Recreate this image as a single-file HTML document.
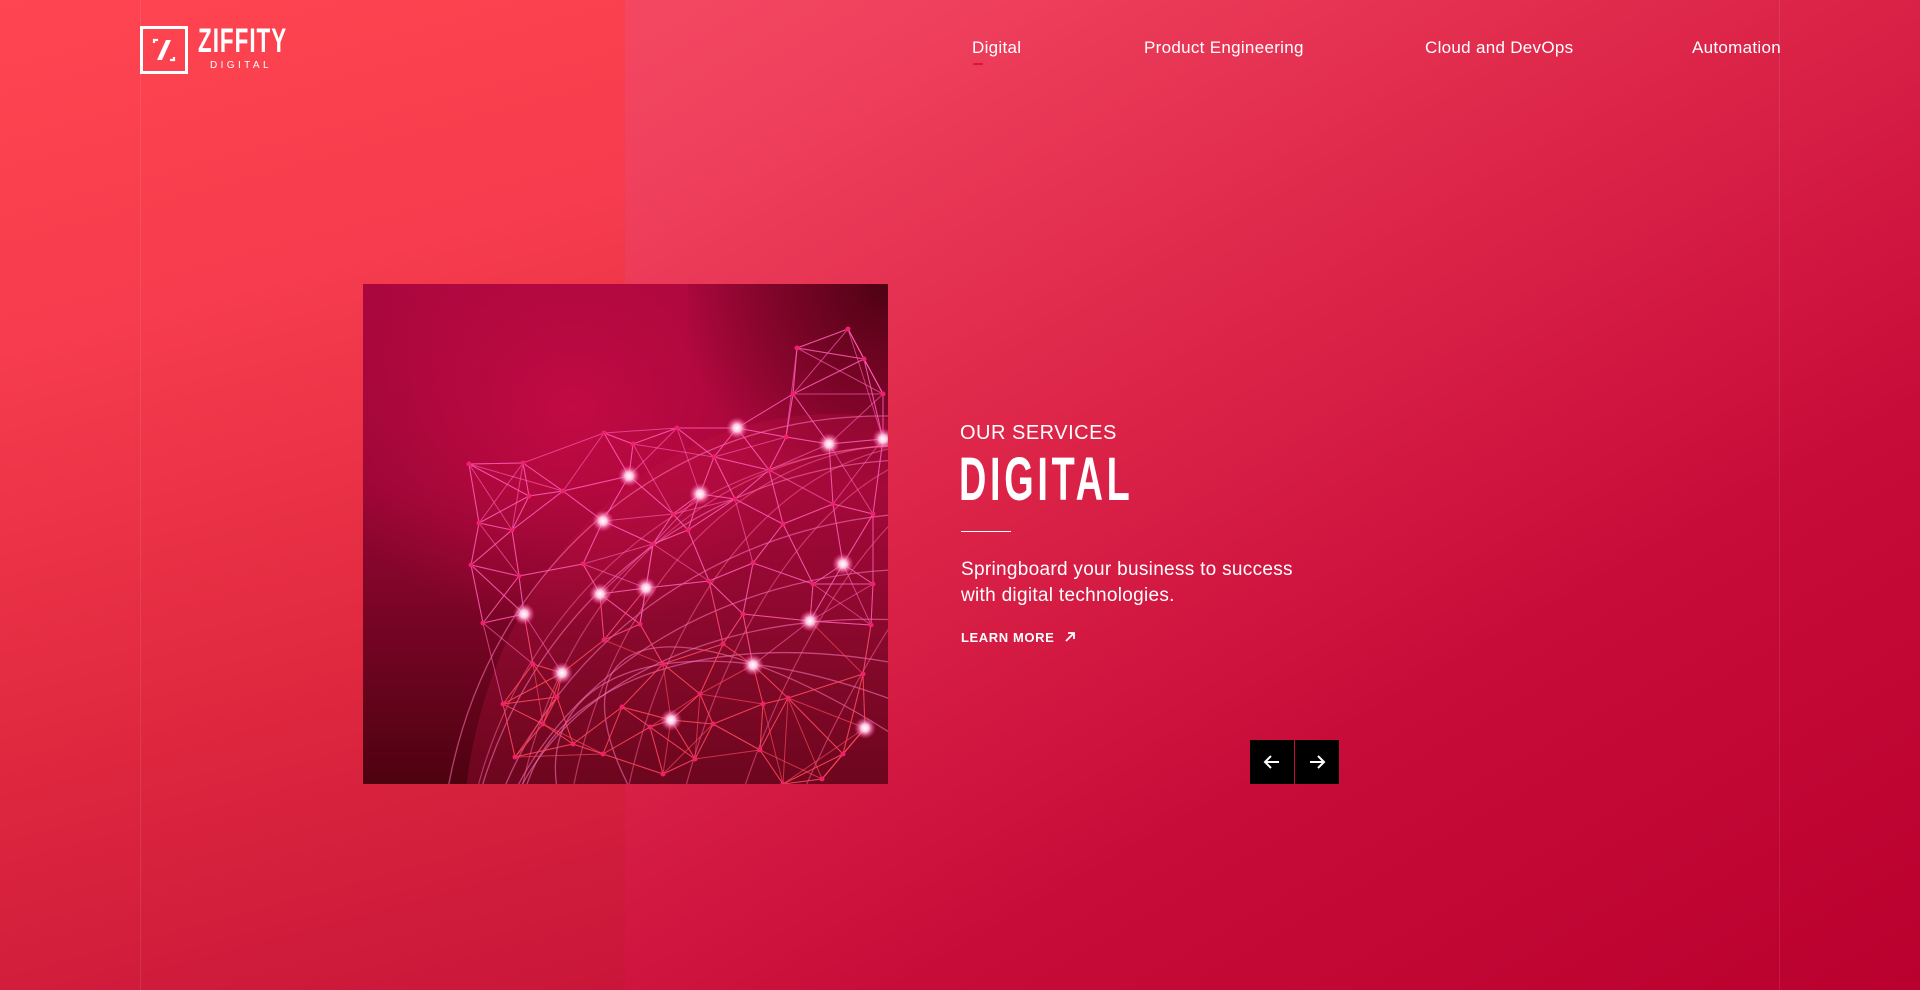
<!DOCTYPE html>
<html><head><meta charset="utf-8">
<style>
*{margin:0;padding:0;box-sizing:border-box}
html,body{width:1920px;height:990px;overflow:hidden}
body{position:relative;font-family:"Liberation Sans",sans-serif;color:#fff;
background:linear-gradient(150deg,#fc5268 0%,#f0425e 25%,#dc2448 50%,#c80c3a 72%,#ba002e 100%);}
.left{position:absolute;left:0;top:0;width:625px;height:990px;
background:linear-gradient(165deg,#ff4550 0%,#f63c4e 30%,#e0283f 65%,#c8163a 100%);}
.vl{position:absolute;top:0;width:1px;height:990px;background:rgba(255,255,255,0.09)}
.logo{position:absolute;left:140px;top:26px;width:48px;height:48px;border:3px solid #fff}
.logotext{position:absolute;left:198px;top:24px;font-weight:bold;font-size:34px;letter-spacing:1.5px;transform:scaleX(0.66);transform-origin:left top;line-height:34px;white-space:nowrap}
.logosub{position:absolute;left:210px;top:60px;font-size:10px;letter-spacing:3.4px;line-height:12px}
.nav{position:absolute;top:38px;font-size:17px;letter-spacing:0.3px;line-height:20px;white-space:nowrap}
.ul{position:absolute;left:973px;top:63px;width:10px;height:2px;background:#e0133d}
.img{position:absolute;left:363px;top:284px;width:525px;height:500px;overflow:hidden;
background:radial-gradient(ellipse 260px 220px at 40% 25%,#c20a44 0%,rgba(180,8,60,0) 100%),
linear-gradient(180deg,#a9073e 0%,#9a0636 40%,#6e0420 75%,#4e0210 100%);}
.img::after{content:"";position:absolute;right:0;top:0;width:200px;height:200px;background:radial-gradient(circle at 100% 0%,#4e0212 0%,rgba(80,2,18,0) 75%)}
.os{position:absolute;left:960px;top:421px;font-size:20px;letter-spacing:0.5px;line-height:24px}
.big{position:absolute;left:959px;top:449px;font-size:61px;font-weight:bold;line-height:61px;transform:scaleX(0.62);transform-origin:left top;letter-spacing:6px;white-space:nowrap}
.hr{position:absolute;left:961px;top:531px;width:50px;height:1px;background:#fff}
.p{position:absolute;left:961px;top:557px;font-size:19px;line-height:26px;letter-spacing:0.3px}
.lm{position:absolute;left:961px;top:630px;font-size:13px;font-weight:bold;letter-spacing:0.6px;line-height:16px;white-space:nowrap}
.btn{position:absolute;top:740px;width:44px;height:44px;background:#000}
</style></head><body>
<div class="left"></div>
<div class="vl" style="left:140px"></div>
<div class="vl" style="left:1779px"></div>
<div class="logo"><svg width="42" height="42" viewBox="0 0 42 42"><path d="M11 14v-3h4M31 28v3h-4" stroke="#fff" stroke-width="2.2" fill="none"/><path d="M23 11h5L19 31h-5z" fill="#fff"/></svg></div>
<div class="logotext">ZIFFITY</div>
<div class="logosub">DIGITAL</div>
<div class="nav" style="left:972px">Digital</div>
<div class="ul"></div>
<div class="nav" style="left:1144px">Product Engineering</div>
<div class="nav" style="left:1425px">Cloud and DevOps</div>
<div class="nav" style="left:1692px">Automation</div>
<div class="img"><svg id="net" width="525" height="500" style="position:absolute;left:0;top:0;z-index:1"></svg></div>
<div class="os">OUR SERVICES</div>
<div class="big">DIGITAL</div>
<div class="hr"></div>
<div class="p">Springboard your business to success<br>with digital technologies.</div>
<div class="lm">LEARN MORE <svg width="12" height="12" viewBox="0 0 12 12" style="margin-left:5px;vertical-align:-1px"><path d="M2 10L10 2M4 2h6v6" stroke="#fff" stroke-width="1.8" fill="none"/></svg></div>
<div class="btn" style="left:1250px"><svg width="44" height="44"><path d="M29 22H15M21 16l-6 6 6 6" stroke="#fff" stroke-width="2" fill="none"/></svg></div>
<div class="btn" style="left:1295px"><svg width="44" height="44"><path d="M15 22h14M23 16l6 6-6 6" stroke="#fff" stroke-width="2" fill="none"/></svg></div>
<script>
var P=[[106,180],[160,179],[241,149],[314,144],[374,144,1],[466,160,1],[520,155,1],[266,192,1],[337,210,1],[240,237,1],[116,239],[149,246],[166,212],[200,207],[108,281],[156,292],[120,339],[161,330,1],[237,310,1],[283,304,1],[480,280,1],[447,337,1],[390,381,1],[199,389,1],[308,436,1],[502,444,1],[485,45],[434,64],[501,75],[346,297],[390,279],[423,153],[351,173],[406,186],[325,246],[372,215],[277,340],[241,356],[194,413],[337,410],[425,414],[508,341],[259,423],[397,466],[332,475],[287,443],[152,473],[459,495],[140,420],[470,220],[420,240],[510,230],[300,380],[240,470],[380,330],[500,390],[180,440],[360,360],[430,110],[520,110],[290,260],[450,300],[220,280],[400,420],[480,470],[350,440],[210,460],[170,380],[300,490],[420,500],[510,300],[270,160],[310,230]];
var s='<defs><radialGradient id="g"><stop offset="0" stop-color="#fff"/><stop offset="0.35" stop-color="#ffc8e0"/><stop offset="1" stop-color="#ff3090" stop-opacity="0"/></radialGradient></defs>';
s+='<ellipse cx="470" cy="560" rx="370" ry="430" fill="rgba(200,20,70,0.25)"/>';
for(var i=0;i<8;i++){s+='<ellipse cx="560" cy="640" rx="'+(470-i*10)+'" ry="'+(520-i*55)+'" fill="none" stroke="rgba(255,120,190,0.55)" stroke-width="1.3" transform="rotate('+(-30+i*10)+' 560 640)"/>';}
for(var i=0;i<7;i++){s+='<ellipse cx="560" cy="640" rx="'+(160+i*50)+'" ry="480" fill="none" stroke="rgba(255,100,160,0.5)" stroke-width="1.2" transform="rotate('+(20-i*6)+' 560 640)"/>';}
for(var i=0;i<P.length;i++){var d=[];for(var j=0;j<P.length;j++){if(i==j)continue;var dx=P[i][0]-P[j][0],dy=P[i][1]-P[j][1];d.push([dx*dx+dy*dy,j]);}d.sort(function(a,b){return a[0]-b[0]});
for(var k=0;k<5;k++){var q=P[d[k][1]];var c=P[i][1]>350?'rgba(255,70,90,0.65)':'rgba(255,90,180,0.65)';s+='<line x1="'+P[i][0]+'" y1="'+P[i][1]+'" x2="'+q[0]+'" y2="'+q[1]+'" stroke="'+c+'" stroke-width="1"/>';}}
for(var i=0;i<P.length;i++){if(P[i][2])s+='<circle cx="'+P[i][0]+'" cy="'+P[i][1]+'" r="11" fill="url(#g)"/>';else s+='<circle cx="'+P[i][0]+'" cy="'+P[i][1]+'" r="2.5" fill="#f0206a"/>';}
document.getElementById('net').innerHTML=s;
</script>
</body></html>
